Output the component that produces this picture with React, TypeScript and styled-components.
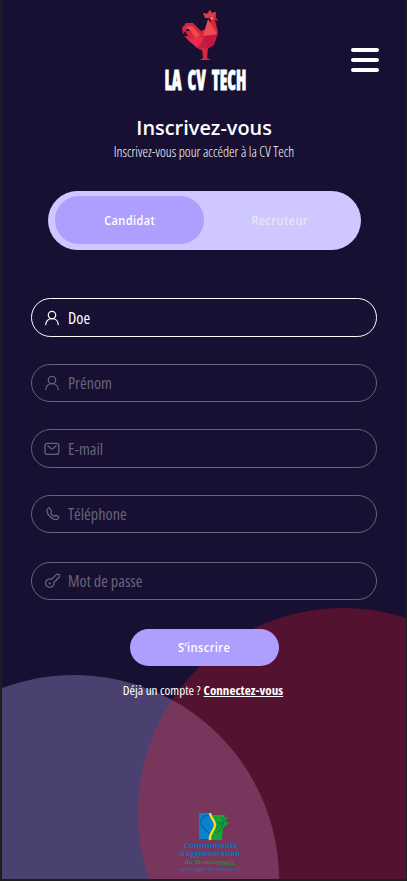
import React from 'react';
import styled, { createGlobalStyle } from 'styled-components';

const GlobalStyle = createGlobalStyle`
  * { box-sizing: border-box; }
  body { margin: 0; background: #1e1e1e; }
`;

const Screen = styled.main`
  position: relative;
  width: 407px;
  height: 881px;
  overflow: hidden;
  background: #171033;
  border: solid #1e1e1e;
  border-width: 0 1px 2px 2px;
  color: #fff;
  font-family: 'Open Sans', 'Noto Sans', sans-serif;
  display: flex;
  flex-direction: column;
  align-items: center;
`;

const Circle = styled.div<{ $x: number; $y: number; $color: string }>`
  position: absolute;
  left: ${p => p.$x}px;
  top: ${p => p.$y}px;
  width: 410px;
  height: 410px;
  border-radius: 50%;
  background: ${p => p.$color};
`;

const Header = styled.header`
  position: relative;
  width: 100%;
  height: 115px;
  flex: none;
  display: flex;
  flex-direction: column;
  align-items: center;
  padding-top: 8px;
`;

const Rooster = styled.svg`
  display: block;
  width: 44px;
  height: 56px;
  margin-right: 6px;
`;

const Text = styled.span<{ $size: number; $line: number; $weight?: number; $stretch?: number; $scale?: number; $spacing?: number; $color?: string }>`
  display: block;
  white-space: nowrap;
  font-size: ${p => p.$size}px;
  line-height: ${p => p.$line}px;
  font-weight: ${p => p.$weight ?? 400};
  font-stretch: ${p => p.$stretch ?? 100}%;
  letter-spacing: ${p => p.$spacing ?? 0}px;
  transform: scaleX(${p => p.$scale ?? 1});
  color: ${p => p.$color ?? '#fff'};
`;

const Brand = styled(Text)`
  margin-left: 2px;
  word-spacing: 5px;
  -webkit-text-stroke: 0.8px #fff;
`;

const MenuButton = styled.button`
  position: absolute;
  right: 27px;
  top: 46px;
  width: 28px;
  height: 28px;
  padding: 2px 0;
  border: 0;
  background: none;
  display: flex;
  flex-direction: column;
  gap: 6.5px;
`;

const MenuBar = styled.span`
  width: 28px;
  height: 3.5px;
  border-radius: 2px;
  background: #fff;
  flex: none;
`;

const Title = styled.div`
  display: flex;
  flex-direction: column;
  align-items: center;
  height: 75.6px;
  flex: none;
`;

const Switcher = styled.div`
  width: 313px;
  height: 59.6px;
  flex: none;
  padding: 5px 7px 6.6px;
  display: flex;
  border-radius: 30px;
  background: #cfc7ff;
`;

const Tab = styled.button<{ $active?: boolean }>`
  width: 149px;
  height: 48px;
  border: 0;
  padding: 3px 0 0 ${p => (p.$active ? 1 : 3)}px;
  border-radius: 24px;
  font-family: inherit;
  background: ${p => (p.$active ? '#ae9fff' : 'transparent')};
  display: flex;
  align-items: center;
  justify-content: center;
`;

const Form = styled.form`
  position: relative;
  width: 346px;
  margin-top: 48px;
  display: flex;
  flex-direction: column;
  align-items: center;
`;

const Field = styled.label<{ $filled?: boolean; $gap: number }>`
  width: 346px;
  height: 38.5px;
  margin-bottom: ${p => p.$gap}px;
  border: 1.2px solid ${p => (p.$filled ? '#fff' : '#686378')};
  border-radius: 20px;
  color: ${p => (p.$filled ? '#fff' : '#686378')};
  display: flex;
  align-items: center;
  gap: 8px;
  padding: 1px 0 0 12px;
`;

const Icon = styled.svg`
  width: 16px;
  height: 16px;
  fill: none;
  stroke: currentColor;
  stroke-width: 1.25;
  stroke-linecap: round;
  stroke-linejoin: round;
`;

const Submit = styled.button`
  width: 149px;
  height: 37.5px;
  border: 0;
  border-radius: 19px;
  padding: 1px 0 0;
  font-family: inherit;
  background: #ae9fff;
  display: flex;
  align-items: center;
  justify-content: center;
`;

const Login = styled.div`
  position: relative;
  display: flex;
  gap: 3px;
  margin-top: 14px;
  margin-right: 2px;
`;

const Link = styled(Text)`
  text-decoration: underline;
  text-underline-offset: 1px;
  text-decoration-thickness: 1px;
`;

const Partner = styled.svg`
  position: relative;
  display: block;
  width: 64px;
  height: 62px;
  flex: none;
  margin: 111.5px 0 0 11px;
`;

const Person = () => (
  <Icon viewBox="0 0 16 16">
    <circle cx="8" cy="5" r="3.7" />
    <path d="M1.8 14.6C1.8 11.2 4.2 8.7 8 8.7s6.2 2.5 6.2 5.9" />
  </Icon>
);
const Mail = () => (
  <Icon viewBox="0 0 16 16">
    <rect x="1" y="2.3" width="13.8" height="11" rx="2.4" />
    <path d="M4 5l3 2.500q1 .8 2 0l3-2.500" />
  </Icon>
);
const Phone = () => (
  <Icon viewBox="0 0 16 16">
    <path d="M6.300 3.100c-.7-1.200-1.500-1.400-2.200-.7-2.100 1.800-1.100 5.100 1.900 8.100s6.300 4 8.200 2c.9-1 .6-1.700-.5-2.400-1.700-1.100-2.200-1-3.300.1-.8.500-3.700-2.400-3.400-3.400 1.200-1.300.3-2.300-.7-3.700Z" />
  </Icon>
);
const Key = () => (
  <Icon viewBox="0 0 16 16">
    <path d="M7.600 6.300l5-4.900q.4-.4 1 0h1.100q.9 0 .9 1v1.800l-1.300.3-.3 1.300-1.400.3-.3 1.400-1.300.6-1.100 1.100A4.200 4.200 0 1 1 7.600 6.300Z" />
    <circle cx="5.700" cy="10.400" r=".5" />
  </Icon>
);

const fields = [
  { icon: Person, label: 'Doe', gap: 27, filled: true },
  { icon: Person, label: 'Prénom', gap: 27 },
  { icon: Mail, label: 'E-mail', gap: 27 },
  { icon: Phone, label: 'Téléphone', gap: 28.5 },
  { icon: Key, label: 'Mot de passe', gap: 28.5 },
];

export default function App() {
  return (
    <>
      <GlobalStyle />
      <Screen>
        <Circle $x={-133.5} $y={674.5} $color="#4b4171" />
        <Circle $x={135.5} $y={608} $color="rgba(249, 27, 36, 0.27)" />
        <Header>
          <Rooster viewBox="0 0 44 56">
            <path fill="#d8243f" d="M24 5l4 1 3-4 2 3 4-1v6l3 3-4-1 3 12-3 10-9 7h-7l-9-7-6-6h4l-3-5h5l-2-3-5 6-1-6 4-5h7l8 8 7-3 3-8z" />
            <path fill="#ef4a49" d="M6 19l7-1 8 9-4 4-5-8z" />
            <path fill="#f04a50" d="M29 11l-5 17 14-2z" />
            <path fill="#c5163f" d="M25 28l13-1-3 10-8 5z" />
            <path fill="#ee294a" d="M9 31l16-2-7 11z" />
            <path fill="#c01d47" d="M19 41l6-12 2 12-3 2z" />
            <path fill="#e03a46" d="M24 5l4 1 3-4 2 3 4-1-3 6h-8z" />
            <path fill="#d62740" d="M23 40h6l-1 10 4 2H21l3-2z" />
            <circle cx="33" cy="10.5" r=".9" fill="#ffc0ba" />
          </Rooster>
          <Brand $size={29} $line={30} $weight={800} $stretch={75} $scale={0.59}>LA CV TECH</Brand>
          <MenuButton aria-label="Menu"><MenuBar /><MenuBar /><MenuBar /></MenuButton>
        </Header>
        <Title>
          <Text $size={20} $line={26} $weight={600} $scale={0.995}>Inscrivez-vous</Text>
          <Text $size={13.9} $line={21} $weight={300} $stretch={75}>Inscrivez-vous pour accéder à la CV Tech</Text>
        </Title>
        <Switcher>
          <Tab $active><Text $size={12} $line={18} $weight={600} $spacing={0.4} $scale={0.92}>Candidat</Text></Tab>
          <Tab><Text $size={12} $line={18} $weight={600} $spacing={0.4} $scale={0.92} $color="#e7e6f0">Recruteur</Text></Tab>
        </Switcher>
        <Form>
          {fields.map(({ icon: Glyph, label, gap, filled }) => (
            <Field key={label} $filled={filled} $gap={gap}>
              <Glyph />
              <Text $size={16.2} $line={22} $stretch={75} $color="currentColor">{label}</Text>
            </Field>
          ))}
          <Submit type="button"><Text $size={12} $line={18} $weight={600} $spacing={0.4} $scale={0.93}>S’inscrire</Text></Submit>
        </Form>
        <Login>
          <Text $size={13.2} $line={20} $stretch={75}>Déjà un compte ?</Text>
          <Link as="a" $size={13.1} $line={20} $weight={700} $stretch={75}>Connectez-vous</Link>
        </Login>
        <Partner viewBox="0 0 64 62">
          <path fill="#0784cf" d="M21 1h12l3 8-2 18H21z" />
          <path fill="none" stroke="#0867af" strokeWidth="1.5" d="M33 5c-5-4-10 1-10 6s6 8 10 12" />
          <path fill="#17a339" d="M34 3h13l-1 3 4-1-3 4 4 2-6 5-1 12H32l5-13z" />
          <path fill="none" stroke="#057c38" d="M38 17l8-8M37 21c6-2 9-8 8-12M43 5l5 5M39 10l6 2" />
          <path fill="none" stroke="#ffda18" strokeWidth="2.4" d="M32 1c0 5 5 6 5 12s-6 7-5 15" />
          <g fontFamily="Open Sans, sans-serif" fill="#0873bb" textAnchor="middle">
            <text x="33" y="36.3" fontSize="7.8" fontWeight="700" textLength="54" lengthAdjust="spacingAndGlyphs">Communauté</text>
            <text x="32" y="44" fontSize="7.3" fontWeight="700" textLength="60" lengthAdjust="spacingAndGlyphs">d’agglomération</text>
            <text x="31" y="51.5" fontSize="7" fontStyle="italic" fill="#169a3b" fontFamily="Liberation Serif, serif" textLength="49" lengthAdjust="spacingAndGlyphs">du Boulonnais</text>
            <path d="M39 53.500q10-2 18-1" fill="none" stroke="#169a3b" strokeWidth=".7" />
            <text x="32" y="58.5" fontSize="5.2" fill="#4a62a0" textLength="60" lengthAdjust="spacingAndGlyphs">www.agglo-boulonnais.fr</text>
          </g>
        </Partner>
      </Screen>
    </>
  );
}
